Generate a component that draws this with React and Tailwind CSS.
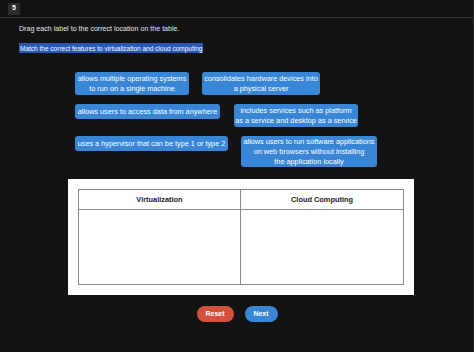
import React from 'react';

const Label = ({ className = '', children }) => (
    <div className={`bg-[#3a86d6] text-white rounded-[3px] text-center leading-[10px] text-[7.3px] whitespace-nowrap flex flex-col items-center justify-center ${className}`}>
        {children}
    </div>
);

const App = () => {
    return (
        <div
            className="w-[474px] h-[352px] bg-[#131313] text-[7px] overflow-hidden relative antialiased"
            style={{ fontFamily: '"Liberation Sans", Arial, sans-serif' }}
        >
            {/* Top bar */}
            <div className="h-[18px] border-b border-[#343434] flex items-center pl-[8px]">
                <div className="w-[12px] h-[12px] bg-[#2c2c2c] text-white font-bold text-[7px] flex items-center justify-center">
                    5
                </div>
            </div>

            <div className="pl-[19px] pt-[6px]">
                <p className="text-[#e6e6e6] text-[7.1px] leading-[10px]">
                    Drag each label to the correct location on the table.
                </p>
                <p className="mt-[9px] leading-[10px]">
                    <span className="bg-[#2857b4] text-white text-[6.5px] px-[1px] py-[1.5px]">
                        Match the correct features to virtualization and cloud computing
                    </span>
                </p>
            </div>

            {/* Labels */}
            <div className="pl-[75px] pt-[19px] flex flex-col">
                <div className="flex gap-[13px] items-start">
                    <Label className="w-[114px] h-[23px]">
                        <span>allows multiple operating systems</span>
                        <span>to run on a single machine</span>
                    </Label>
                    <Label className="w-[118px] h-[23px]">
                        <span>consolidates hardware devices into</span>
                        <span>a physical server</span>
                    </Label>
                </div>
                <div className="flex gap-[14px] items-start mt-[9px]">
                    <Label className="w-[145px] h-[15px]">
                        <span>allows users to access data from anywhere</span>
                    </Label>
                    <Label className="w-[124px] h-[23px]">
                        <span>includes services such as platform</span>
                        <span>as a service and desktop as a service</span>
                    </Label>
                </div>
                <div className="flex gap-[13px] items-start mt-[9px]">
                    <Label className="w-[153px] h-[15px]">
                        <span>uses a hypervisor that can be type 1 or type 2</span>
                    </Label>
                    <Label className="w-[136px] h-[31px]">
                        <span>allows users to run software applications</span>
                        <span>on web browsers without installing</span>
                        <span>the application locally</span>
                    </Label>
                </div>
            </div>

            {/* Table panel */}
            <div className="ml-[68px] mt-[12px] w-[346px] h-[116px] bg-white p-[10px]">
                <div className="w-full h-full border border-[#8a8a8a] grid grid-cols-2 grid-rows-[20px_1fr]">
                    <div className="border-r border-b border-[#8a8a8a] flex items-center justify-center font-bold text-[7.4px] text-[#222222]">
                        Virtualization
                    </div>
                    <div className="border-b border-[#8a8a8a] flex items-center justify-center font-bold text-[7.4px] text-[#222222]">
                        Cloud Computing
                    </div>
                    <div className="border-r border-[#8a8a8a]" />
                    <div />
                </div>
            </div>

            {/* Buttons */}
            <div className="flex justify-center gap-[11px] mt-[11px]">
                <button className="w-[37px] h-[16px] rounded-full bg-[#d5513f] text-white font-bold text-[7px]">
                    Reset
                </button>
                <button className="w-[33px] h-[16px] rounded-full bg-[#3a86d6] text-white font-bold text-[7px]">
                    Next
                </button>
            </div>

            <div className="absolute right-0 top-0 bottom-0 w-[1px] bg-[#2a2a2a]" />
        </div>
    );
};

export default App;
